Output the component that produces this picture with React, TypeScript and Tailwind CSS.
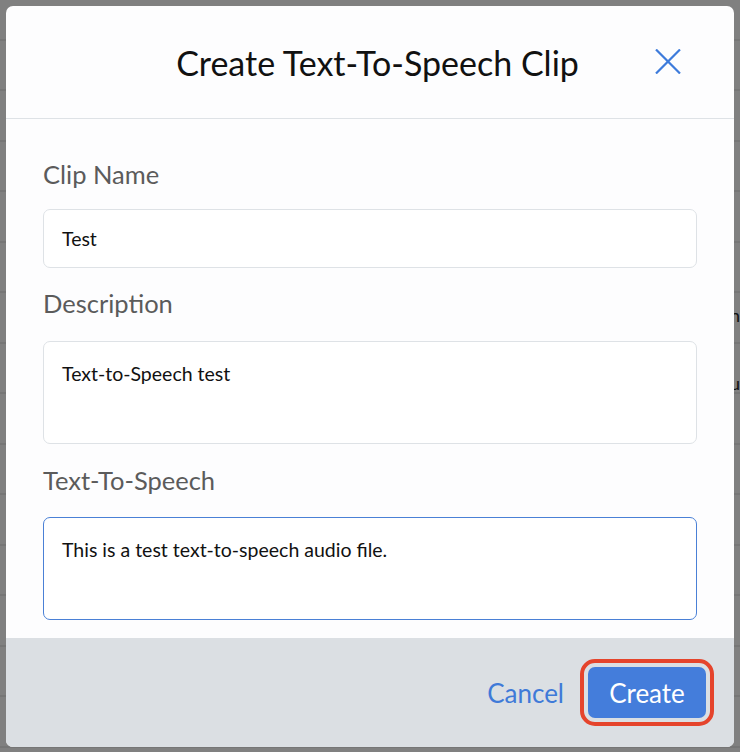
import React from "react";

const rows = Array.from({ length: 16 }, (_, i) => i);

export default function App() {
  return (
    <div
      className="relative w-[740px] h-[752px] overflow-hidden bg-[#808080]"
      style={{ fontFamily: "Lato, 'Noto Sans', sans-serif" }}
    >
      {/* background page rows seen through the overlay */}
      <div className="flex flex-col -mt-[10px]">
        {rows.map((i) => (
          <div
            key={i}
            className={
              "h-[50.5px] shrink-0 border-b-2 border-[#767676] flex " +
              (i === 7 ? "items-start pt-[28px]" : "items-center")
            }
          >
            {i === 6 && <span className="pl-[730px] text-[18px] leading-[22px] text-[#111] -mt-[5px]">n</span>}
            {i === 7 && <span className="pl-[730px] text-[18px] leading-[22px] text-[#111]">u</span>}
          </div>
        ))}
      </div>

      {/* modal */}
      <div className="absolute left-[6px] top-[6px] w-[728px] h-[741px] rounded-[7px] bg-[#fdfdfe] overflow-hidden flex flex-col">
        <div className="h-[113px] shrink-0 border-b border-[#dee2e6] flex items-center relative">
          <h2 className="w-full text-center text-[34px] text-[#111] leading-none pt-[2px] pl-[15px]">
            Create Text-To-Speech Clip
          </h2>
          <button className="absolute left-[642px] top-[35px] w-[40px] h-[40px] flex items-center justify-center">
            <svg width="26" height="25" viewBox="0 0 26 25" fill="none">
              <path d="M1 0.5 L25 24.5 M25 0.5 L1 24.5" stroke="#3d7bdb" strokeWidth="2.2" />
            </svg>
          </button>
        </div>

        <div className="flex-1 flex flex-col px-[37px] pt-[39px]">
          <label className="text-[25.5px] leading-[32px] text-[#5b5b5b]">Clip Name</label>
          <div className="mt-[19px] h-[59px] rounded-[7px] border border-[#dee2e6] bg-white flex items-center px-[18px] text-[19.5px] text-[#111]">
            Test
          </div>
          <label className="mt-[19px] text-[25.5px] leading-[32px] text-[#5b5b5b]">Description</label>
          <div className="mt-[22px] h-[103px] rounded-[7px] border border-[#dee2e6] bg-white px-[18px] pt-[18px] text-[19.5px] leading-[27px] text-[#111]">
            Text-to-Speech test
          </div>
          <label className="mt-[20px] text-[25.5px] leading-[32px] text-[#5b5b5b]">Text-To-Speech</label>
          <div className="mt-[21px] h-[103px] rounded-[7px] border border-[#4a80d6] bg-white px-[18px] pt-[18px] text-[19.5px] leading-[27px] text-[#111]">
            This is a test text-to-speech audio file.
          </div>
        </div>

        <div className="h-[109px] shrink-0 bg-[#dbdfe3] flex items-center justify-end pr-[20px] gap-[16px]">
          <button className="text-[26px] text-[#3f7ad8] leading-none">Cancel</button>
          <span className="rounded-[15px] border-4 border-[#e5442c] p-[4px]">
            <button className="w-[118px] h-[51px] rounded-[7px] bg-[#447ddb] text-white text-[26px] leading-none flex items-center justify-center">
              Create
            </button>
          </span>
        </div>
      </div>
    </div>
  );
}
